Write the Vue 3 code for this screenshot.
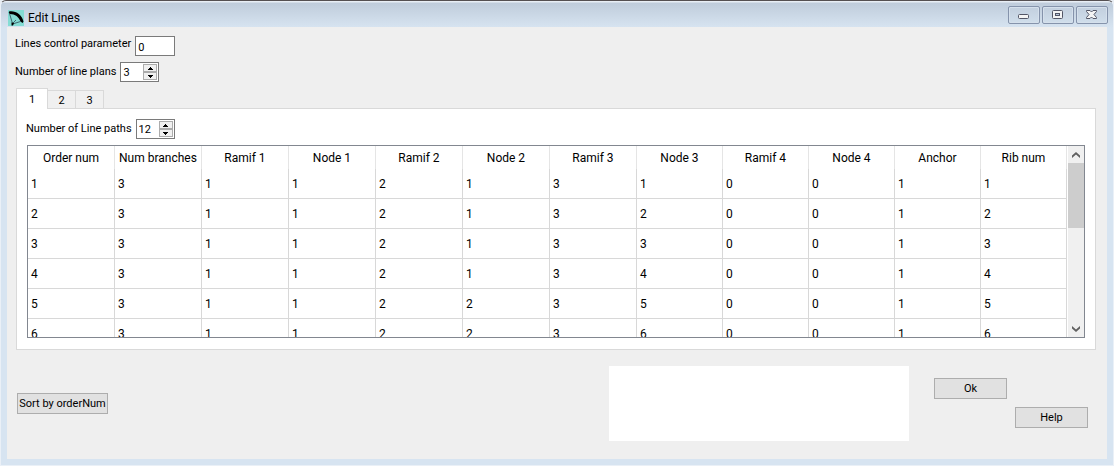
<script setup>
import { ref } from 'vue'

const controlParameter = ref('0')
const linePlans = ref(3)
const linePaths = ref(12)
const activeTab = ref(1)
const message = ref('')
const viewport = ref(null)

const columns = [
  'Order num', 'Num branches', 'Ramif 1', 'Node 1', 'Ramif 2', 'Node 2',
  'Ramif 3', 'Node 3', 'Ramif 4', 'Node 4', 'Anchor', 'Rib num',
]

const rows = [
  [1, 3, 1, 1, 2, 1, 3, 1, 0, 0, 1, 1],
  [2, 3, 1, 1, 2, 1, 3, 2, 0, 0, 1, 2],
  [3, 3, 1, 1, 2, 1, 3, 3, 0, 0, 1, 3],
  [4, 3, 1, 1, 2, 1, 3, 4, 0, 0, 1, 4],
  [5, 3, 1, 1, 2, 2, 3, 5, 0, 0, 1, 5],
  [6, 3, 1, 1, 2, 2, 3, 6, 0, 0, 1, 6],
]

function scrollRows(direction) {
  viewport.value.scrollBy(0, direction * 30)
}
</script>

<template>
  <div class="window">
    <header class="titlebar">
      <svg class="logo" viewBox="0 0 16 16" aria-hidden="true">
        <rect width="16" height="16" fill="#84dcd4" />
        <path d="M1 1.500C7 .2 14 4.500 15.500 11.500L14.500 13 12.500 11.500C11 7 7 4 2 4L.8 3Z" fill="#000" />
        <path d="M1.500 3.500 4.500 13.500M4.500 14 12.500 11.500M4.500 13.500 8 10" fill="none" stroke="#234" stroke-width=".7" />
        <path d="M3.500 12.500l2.500 .5-1 2.500H3.500Z" fill="#000" />
      </svg>
      <h1>Edit Lines</h1>
      <div class="controls">
        <button type="button" aria-label="Minimize">
          <svg viewBox="0 0 30 16"><rect x="9.500" y="7.500" width="10" height="4" rx="1" fill="#f4f4f4" stroke="#535666" /></svg>
        </button>
        <button type="button" aria-label="Maximize">
          <svg viewBox="0 0 30 16"><rect x="9.500" y="3.500" width="10" height="8" rx="1" fill="#f4f4f4" stroke="#535666" /><rect x="12.500" y="6.500" width="4" height="2" fill="#b9c8dc" stroke="#535666" /></svg>
        </button>
        <button type="button" aria-label="Close">
          <svg viewBox="0 0 30 16"><path d="M9.500 3.500H13L14.500 5 16 3.500H19.500V4.500L17 7.500 19.500 10.500V11.500H16L14.500 10 13 11.500H9.500V10.500L12 7.500 9.500 4.500Z" fill="#f4f4f4" stroke="#535666" /></svg>
        </button>
      </div>
    </header>

    <main class="client">
      <div class="field">
        <label class="raised" for="control">Lines control parameter</label>
        <input id="control" v-model="controlParameter" class="text" type="text">
      </div>
      <div class="field plans">
        <label for="plans">Number of line plans</label>
        <span class="spin">
          <input id="plans" v-model="linePlans" type="text" inputmode="numeric">
          <span class="steps">
            <button type="button" aria-label="Increase line plans" @click="linePlans++"><svg viewBox="0 0 5 3"><path d="M2 0H3V1H4V2H5V3H0V2H1V1H2Z" /></svg></button>
            <button type="button" aria-label="Decrease line plans" @click="linePlans--"><svg viewBox="0 0 5 3"><path d="M0 0H5V1H4V2H3V3H2V2H1V1H0Z" /></svg></button>
          </span>
        </span>
      </div>

      <div class="tabs" role="tablist">
        <button
          v-for="n in 3" :key="n" type="button" role="tab"
          :aria-selected="activeTab === n" :class="{ active: activeTab === n }"
          @click="activeTab = n"
        >{{ n }}</button>
      </div>

      <section class="pane" role="tabpanel">
        <div class="field">
          <label for="paths">Number of Line paths</label>
          <span class="spin">
            <input id="paths" v-model="linePaths" type="text" inputmode="numeric">
            <span class="steps">
              <button type="button" aria-label="Increase line paths" @click="linePaths++"><svg viewBox="0 0 5 3"><path d="M2 0H3V1H4V2H5V3H0V2H1V1H2Z" /></svg></button>
              <button type="button" aria-label="Decrease line paths" @click="linePaths--"><svg viewBox="0 0 5 3"><path d="M0 0H5V1H4V2H3V3H2V2H1V1H0Z" /></svg></button>
            </span>
          </span>
        </div>

        <div class="grid">
          <div ref="viewport" class="viewport">
            <table>
              <thead>
                <tr><th v-for="c in columns" :key="c" scope="col">{{ c }}</th></tr>
              </thead>
              <tbody>
                <tr v-for="row in rows" :key="row[0]">
                  <td v-for="(v, i) in row" :key="i">{{ v }}</td>
                </tr>
              </tbody>
            </table>
          </div>
          <div class="scrollbar">
            <button type="button" aria-label="Scroll up" @click="scrollRows(-1)"><svg viewBox="0 0 8 6"><path d="M0 6V3.500L4 0 8 3.500V6L4 2.500Z" /></svg></button>
            <span class="thumb"></span>
            <button type="button" aria-label="Scroll down" @click="scrollRows(1)"><svg viewBox="0 0 8 6"><path d="M0 0V2.500L4 6 8 2.500V0L4 3.500Z" /></svg></button>
          </div>
        </div>
      </section>

      <footer class="footer">
        <button type="button" class="push sort">Sort by orderNum</button>
        <textarea v-model="message" class="message" aria-label="Messages" readonly></textarea>
        <div class="actions">
          <button type="button" class="push">Ok</button>
          <button type="button" class="push help">Help</button>
        </div>
      </footer>
    </main>
  </div>
</template>

<style>
body {
  background: #e9eef4;
}
</style>

<style scoped>
* {
  box-sizing: border-box;
}

.window {
  display: flex;
  flex-direction: column;
  min-height: 100vh;
  padding: 0 6px 6px;
  border: 1px solid #eaf0f7;
  border-top: 1px solid #555052;
  border-radius: 6px 6px 0 0;
  background: linear-gradient(#e8eef5 0, #e8eef5 1px, #bfccdb 2px, #d7e4f1 27px);
  color: #000;
  font: 12px/16px Roboto, "Open Sans", sans-serif;
}

button,
input,
textarea {
  margin: 0;
  padding: 0;
  border: 0;
  border-radius: 0;
  color: inherit;
  font: inherit;
}

.titlebar {
  display: flex;
  align-items: center;
  height: 26px;
  padding: 8px 0 0 1px;
}

.logo {
  width: 16px;
  height: 16px;
}

h1 {
  flex: 1;
  margin: 0 0 0 4px;
  font-size: 12px;
  font-weight: 400;
}

.controls {
  display: flex;
  align-self: flex-start;
  gap: 2px;
  margin: -3px -1px 0 0;
}

.controls button {
  width: 32px;
  height: 18px;
  border: 1px solid #8593ab;
  border-radius: 2px;
  background: linear-gradient(#c2cfde, #d0deeb);
  box-shadow: inset 0 0 0 1px #d5e0ec;
}

.controls svg {
  display: block;
  width: 30px;
  height: 16px;
}

.client {
  flex: 1;
  padding: 8px 11px 18px 8px;
  background: #efefef;
}

.field {
  display: flex;
  align-items: center;
  gap: 4px;
  height: 22px;
  font-size: 11px;
}

.raised {
  padding-bottom: 4px;
}

.plans {
  margin-top: 4px;
}

.text,
.spin {
  height: 20px;
  border: 1px solid #7a7a7a;
  background: #fff;
}

.text {
  width: 40px;
  padding: 2px 2px 0;
}

.spin {
  display: flex;
  width: 39px;
  padding: 1px 1px 1px 2px;
}

.spin input {
  flex: 1;
  width: 0;
  min-width: 0;
  padding-top: 2px;
  background: transparent;
}

.steps {
  display: flex;
  flex-direction: column;
  width: 14px;
}

.steps button {
  display: flex;
  flex: 1;
  align-items: center;
  justify-content: center;
  border: 1px solid #acacac;
  background: #f0f0f0;
}

.steps svg {
  width: 5px;
  height: 3px;
}

.tabs {
  display: flex;
  align-items: flex-end;
  height: 20px;
  margin: 5px 0 0 1px;
}

.tabs button {
  width: 28px;
  height: 18px;
  padding-top: 2px;
  border: 1px solid #d9d9d9;
  border-width: 1px 1px 0 0;
  background: #f0f0f0;
  font-size: 11px;
}

.tabs .active {
  z-index: 1;
  width: 32px;
  height: 21px;
  margin-bottom: -1px;
  border-left-width: 1px;
  background: #fff;
}

.pane {
  margin-left: 1px;
  padding: 9px 10px 11px 10px;
  border: 1px solid #d9d9d9;
  background: #fff;
}

.pane .field {
  margin-left: -1px;
}

.grid {
  display: flex;
  height: 193px;
  margin-top: 5px;
  border: 1px solid #828790;
}

.viewport {
  flex: 1;
  overflow: auto;
  scrollbar-width: none;
}

table {
  width: 100%;
  border-collapse: separate;
  border-spacing: 0;
  table-layout: fixed;
}

th {
  height: 23px;
  padding: 0;
  border-right: 1px solid #e5e5e5;
  font-weight: 400;
  white-space: nowrap;
}

th:nth-child(-n+7) {
  width: 87px;
}

td {
  height: 30px;
  padding: 0 3px;
  border: 1px solid #d8d8d8;
  border-width: 0 1px 1px 0;
}

.scrollbar {
  display: flex;
  flex-direction: column;
  width: 16px;
  margin-left: 1px;
  background: #f0f0f0;
}

.scrollbar button {
  display: flex;
  align-items: center;
  justify-content: center;
  height: 17px;
  background: transparent;
}

.scrollbar button:last-child {
  margin-top: auto;
}

.scrollbar svg {
  width: 8px;
  height: 6px;
  fill: #606060;
}

.thumb {
  height: 65px;
  background: #cdcdcd;
}

.footer {
  display: flex;
  align-items: center;
  margin: 16px 8px 0 2px;
}

.push {
  height: 21px;
  border: 1px solid #adadad;
  background: #e1e1e1;
  font-size: 11px;
  white-space: nowrap;
}

.sort {
  width: 91px;
}

.message {
  width: 300px;
  height: 75px;
  margin-left: auto;
  background: #fff;
  resize: none;
}

.actions {
  display: grid;
  grid-template-columns: 73px 73px;
  gap: 8px;
  align-self: flex-start;
  margin: 12px 0 0 25px;
}

.help {
  grid-area: 2 / 2;
}
</style>
